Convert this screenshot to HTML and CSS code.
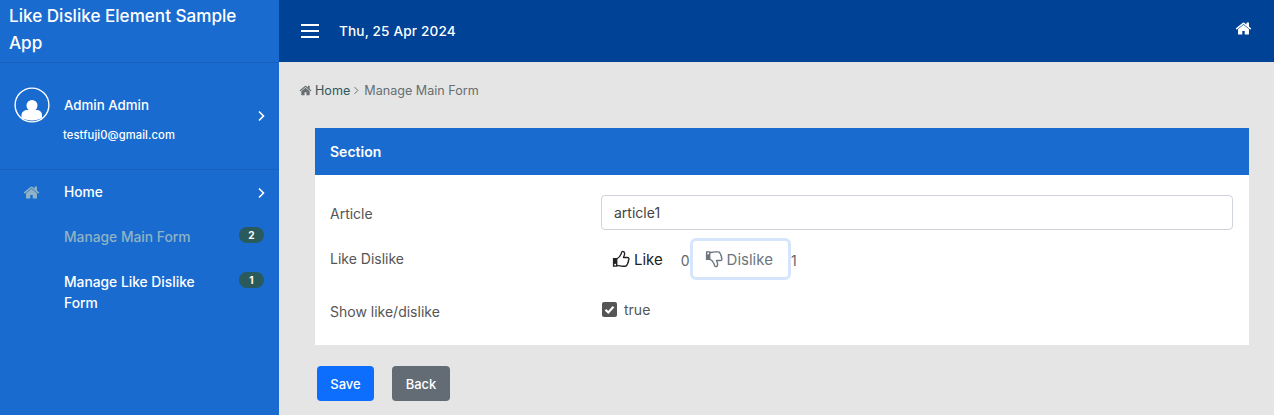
FILE: index.html
```html
<!DOCTYPE html>
<html lang="en">
<head>
    <meta charset="UTF-8">
    <meta name="viewport" content="width=device-width, initial-scale=1.0">
    <title>Like Dislike Element Sample App</title>
    <link rel="stylesheet" href="styles.css">
</head>
<body>
    <svg class="icon-defs" width="0" height="0">
        <symbol id="home" viewBox="0 0 1792 1792">
            <path d="M1472 992v480q0 26-19 45t-45 19h-384v-384h-256v384h-384q-26 0-45-19t-19-45v-480q0-1 .5-3t.5-3l575-474 575 474q1 2 1 6zm223-69l-62 74q-8 9-21 11h-3q-13 0-21-7l-692-577-692 577q-12 8-24 7-13-2-21-11l-62-74q-8-10-7-23.5t11-21.5l719-599q32-26 76-26t76 26l244 204v-195q0-14 9-23t23-9h192q14 0 23 9t9 23v408l219 182q10 8 11 21.5t-7 23.5z"/>
        </symbol>
        <symbol id="thumb" viewBox="0 0 20 20">
            <path class="thumb-cuff" d="M1 9h5v9.500h-5z M3.500 15.300a1 1 0 1 0 .01 0z"/>
            <path class="thumb-hand" d="M5.500 9.500c2.200-.8 3.900-3.200 4.700-5.300.4-1 .5-2.700 1.500-2.700 1.500 0 2.300 1.400 2.300 2.800 0 1.600-.8 2.700-1.300 4h4.300c1.100 0 1.900.8 1.900 1.800 0 .7-.4 1.200-.8 1.600.4.900.2 1.800-.6 2.300.2.900-.1 1.700-.9 2.100 0 1.100-.8 1.900-2.100 1.900h-2.800c-2 0-3.800-1-6.200-1"/>
        </symbol>
    </svg>

    <div class="layout">
        <aside class="sidebar">
            <div class="brand">Like Dislike Element Sample App</div>

            <div class="profile">
                <svg class="avatar" viewBox="0 0 36 36">
                    <circle class="avatar-ring" cx="18" cy="18" r="16.900"/>
                    <circle cx="18" cy="18.500" r="5.500"/>
                    <path d="M7.500 31v-3c0-3 3-5 6-5h9c3 0 5.500 2 5.500 5v3c-3 1.500-6 2.500-10 2.500s-7.500-1-10.500-2.500z"/>
                </svg>
                <div class="profile-text">
                    <div class="profile-name">Admin Admin</div>
                    <div class="profile-email">testfuji0@gmail.com</div>
                </div>
                <svg class="chevron" viewBox="0 0 8 12"><path d="M2 1.500 6.500 6 2 10.500"/></svg>
            </div>

            <nav class="menu">
                <a class="menu-item menu-home">
                    <svg class="menu-icon"><use href="#home"/></svg>
                    <span class="menu-label">Home</span>
                    <svg class="chevron" viewBox="0 0 8 12"><path d="M2 1.500 6.500 6 2 10.500"/></svg>
                </a>
                <a class="menu-item menu-sub is-active">
                    <span class="menu-label">Manage Main Form</span>
                    <span class="badge">2</span>
                </a>
                <a class="menu-item menu-sub">
                    <span class="menu-label">Manage Like Dislike Form</span>
                    <span class="badge">1</span>
                </a>
            </nav>
        </aside>

        <div class="main">
            <header class="topbar">
                <button class="hamburger" type="button"><span></span><span></span><span></span></button>
                <div class="topbar-date">Thu, 25 Apr 2024</div>
                <svg class="topbar-home"><use href="#home"/></svg>
            </header>

            <div class="content">
                <div class="breadcrumb">
                    <svg class="crumb-icon"><use href="#home"/></svg>
                    <a class="crumb-link">Home</a>
                    <svg class="crumb-sep" viewBox="0 0 8 12"><path d="M2 1.500 6.500 6 2 10.500"/></svg>
                    <span>Manage Main Form</span>
                </div>

                <section class="card">
                    <div class="card-header">Section</div>
                    <div class="card-body">
                        <div class="form-row row-article">
                            <label class="form-label">Article</label>
                            <input class="form-input" type="text" value="article1">
                        </div>
                        <div class="form-row row-like">
                            <label class="form-label">Like Dislike</label>
                            <div class="like-group">
                                <button class="like-btn" type="button">
                                    <svg class="thumb"><use href="#thumb"/></svg>Like
                                </button>
                                <span class="like-count">0</span>
                                <button class="like-btn dislike-btn" type="button">
                                    <svg class="thumb thumb-down"><use href="#thumb"/></svg>Dislike
                                </button>
                                <span class="like-count">1</span>
                            </div>
                        </div>
                        <div class="form-row row-check">
                            <label class="form-label">Show like/dislike</label>
                            <label class="check">
                                <span class="check-box">
                                    <svg viewBox="0 0 15 15"><path d="M3.500 7.700 6.300 10.500 11.500 4.700"/></svg>
                                </span>
                                true
                            </label>
                        </div>
                    </div>
                </section>

                <div class="actions">
                    <button class="btn btn-save" type="button">Save</button>
                    <button class="btn btn-back" type="button">Back</button>
                </div>
            </div>
        </div>
    </div>
</body>
</html>
```

FILE: styles.css
```css
* { box-sizing: border-box; }
html, body { height: 100%; }
body { margin: 0; overflow: hidden; font-family: Inter, "Liberation Sans", sans-serif; font-size: 14px; color: #555; background: #e5e5e5; }
button { font-family: inherit; }
.icon-defs { position: absolute; }
.layout { display: flex; height: 415px; }

/* sidebar */
.sidebar { width: 279px; flex: none; background: #1a6bcf; color: #fff; }
.brand { height: 63px; padding: 2px 9px 0; font-size: 17.100px; font-weight: 500; line-height: 27px; border-bottom: 1px solid #1862bf; }
.profile { display: flex; align-items: center; height: 107px; padding: 0 14px; border-bottom: 1px solid #1862bf; }
.avatar { width: 36px; height: 36px; flex: none; margin-bottom: 22px; fill: #fff; }
.avatar-ring { fill: none; stroke: #fff; stroke-width: 1.400; }
.profile-text { flex: 1; padding: 8px 0 0 14px; }
.profile-name { font-size: 13.300px; font-weight: 500; line-height: 18px; margin-bottom: 12px; }
.profile-email { font-size: 11.200px; font-weight: 500; line-height: 18px; letter-spacing: .1px; margin-left: -1px; }
.chevron { width: 8px; height: 12px; flex: none; fill: none; stroke: #fff; stroke-width: 1.600; }
.menu { display: flex; flex-direction: column; }
.menu-item { display: flex; color: #fff; font-size: 13.800px; font-weight: 500; line-height: 21px; }
.menu-home { align-items: center; height: 45px; padding: 0 14px 0 23px; margin-bottom: 12px; }
.menu-icon { width: 17px; height: 17px; flex: none; margin-right: 24px; fill: #8fb3c4; }
.menu-label { flex: 1; }
.menu-sub { padding: 0 15px 0 64px; margin-bottom: 24px; align-items: flex-start; }
.menu-sub .menu-label { padding-right: 20px; }
.is-active { color: #8fb3c4; }
.badge { width: 25px; height: 16px; border-radius: 8px; background: #2a5a5c; color: #fff; font-size: 10px; font-weight: 700; line-height: 17px; text-align: center; }

/* topbar */
.main { flex: 1; min-width: 0; }
.topbar { display: flex; align-items: center; height: 62px; padding: 0 22px; background: #004296; color: #fff; }
.hamburger { display: flex; flex-direction: column; gap: 4px; width: 18px; padding: 0; margin-right: 20px; background: none; border: 0; }
.hamburger span { display: block; height: 2px; background: #fff; }
.topbar-date { flex: 1; font-size: 13.600px; font-weight: 500; letter-spacing: .15px; }
.topbar-home { width: 17px; height: 17px; margin-bottom: 6px; fill: #fff; }

/* page */
.content { padding: 19px 25px 0 20px; }
.breadcrumb { display: flex; align-items: center; height: 19px; font-size: 12.600px; color: #666e72; }
.crumb-icon { width: 13px; height: 13px; margin-right: 3px; fill: #666e72; }
.crumb-link { color: #2e5a5e; }
.crumb-sep { width: 6px; height: 9px; margin: 0 5px 0 3px; fill: none; stroke: #666e72; stroke-width: 1.300; }
.card { margin: 28px 0 0 16px; background: #fff; }
.card-header { height: 47px; padding: 0 15px; background: #1a6bcf; color: #fff; font-size: 14px; font-weight: 600; line-height: 47px; }
.card-body { padding: 20px 16px 0 15px; height: 170px; }
.form-row { display: grid; grid-template-columns: 271px 1fr; align-items: center; }
.form-label { font-size: 14px; color: #555; }
.row-article { height: 35px; }
.row-article .form-label { padding-top: 2px; }
.row-like { height: 42px; margin-top: 8px; }
.row-like .form-label { padding-bottom: 2px; }
.row-check { height: 20px; margin-top: 19px; }
.row-check .form-label { padding-top: 4px; }
.form-input { width: 100%; height: 35px; padding: 0 12px; border: 1px solid #ced4da; border-radius: 4px; font-family: inherit; font-size: 14px; color: #444; }

/* like dislike */
.like-group { display: flex; align-items: center; }
.like-btn { display: flex; align-items: center; height: 42px; padding: 0 15px 0 10px; background: none; border: 3px solid transparent; border-radius: 6px; color: #222; font-size: 15px; }
.like-count { font-size: 14px; color: #666; margin-top: 3px; }
.like-group .like-btn:first-child { margin-left: -2px; }
.dislike-btn { padding: 0 15px 0 12px; border-color: #d6e5fb; color: #6c757d; }
.thumb { width: 18px; height: 18px; margin-right: 4px; }
.thumb-cuff { fill: currentColor; fill-rule: evenodd; }
.thumb-hand { fill: none; stroke: currentColor; stroke-width: 1.500; stroke-linejoin: round; }
.thumb-down { transform: scaleY(-1); }
.check { display: flex; align-items: center; font-size: 14px; color: #555; }
.check-box { width: 15px; height: 15px; margin: 0 7px 0 1px; border-radius: 2px; background: #555; }
.check-box svg { display: block; fill: none; stroke: #fff; stroke-width: 2.200; }

/* buttons */
.actions { display: flex; gap: 18px; margin: 21px 0 0 18px; }
.btn { height: 35px; padding: 0; border: 0; border-radius: 4px; color: #fff; font-size: 13px; font-weight: 500; }
.btn-save { width: 57px; background: #0d6efd; }
.btn-back { width: 58px; background: #636b75; }
```
